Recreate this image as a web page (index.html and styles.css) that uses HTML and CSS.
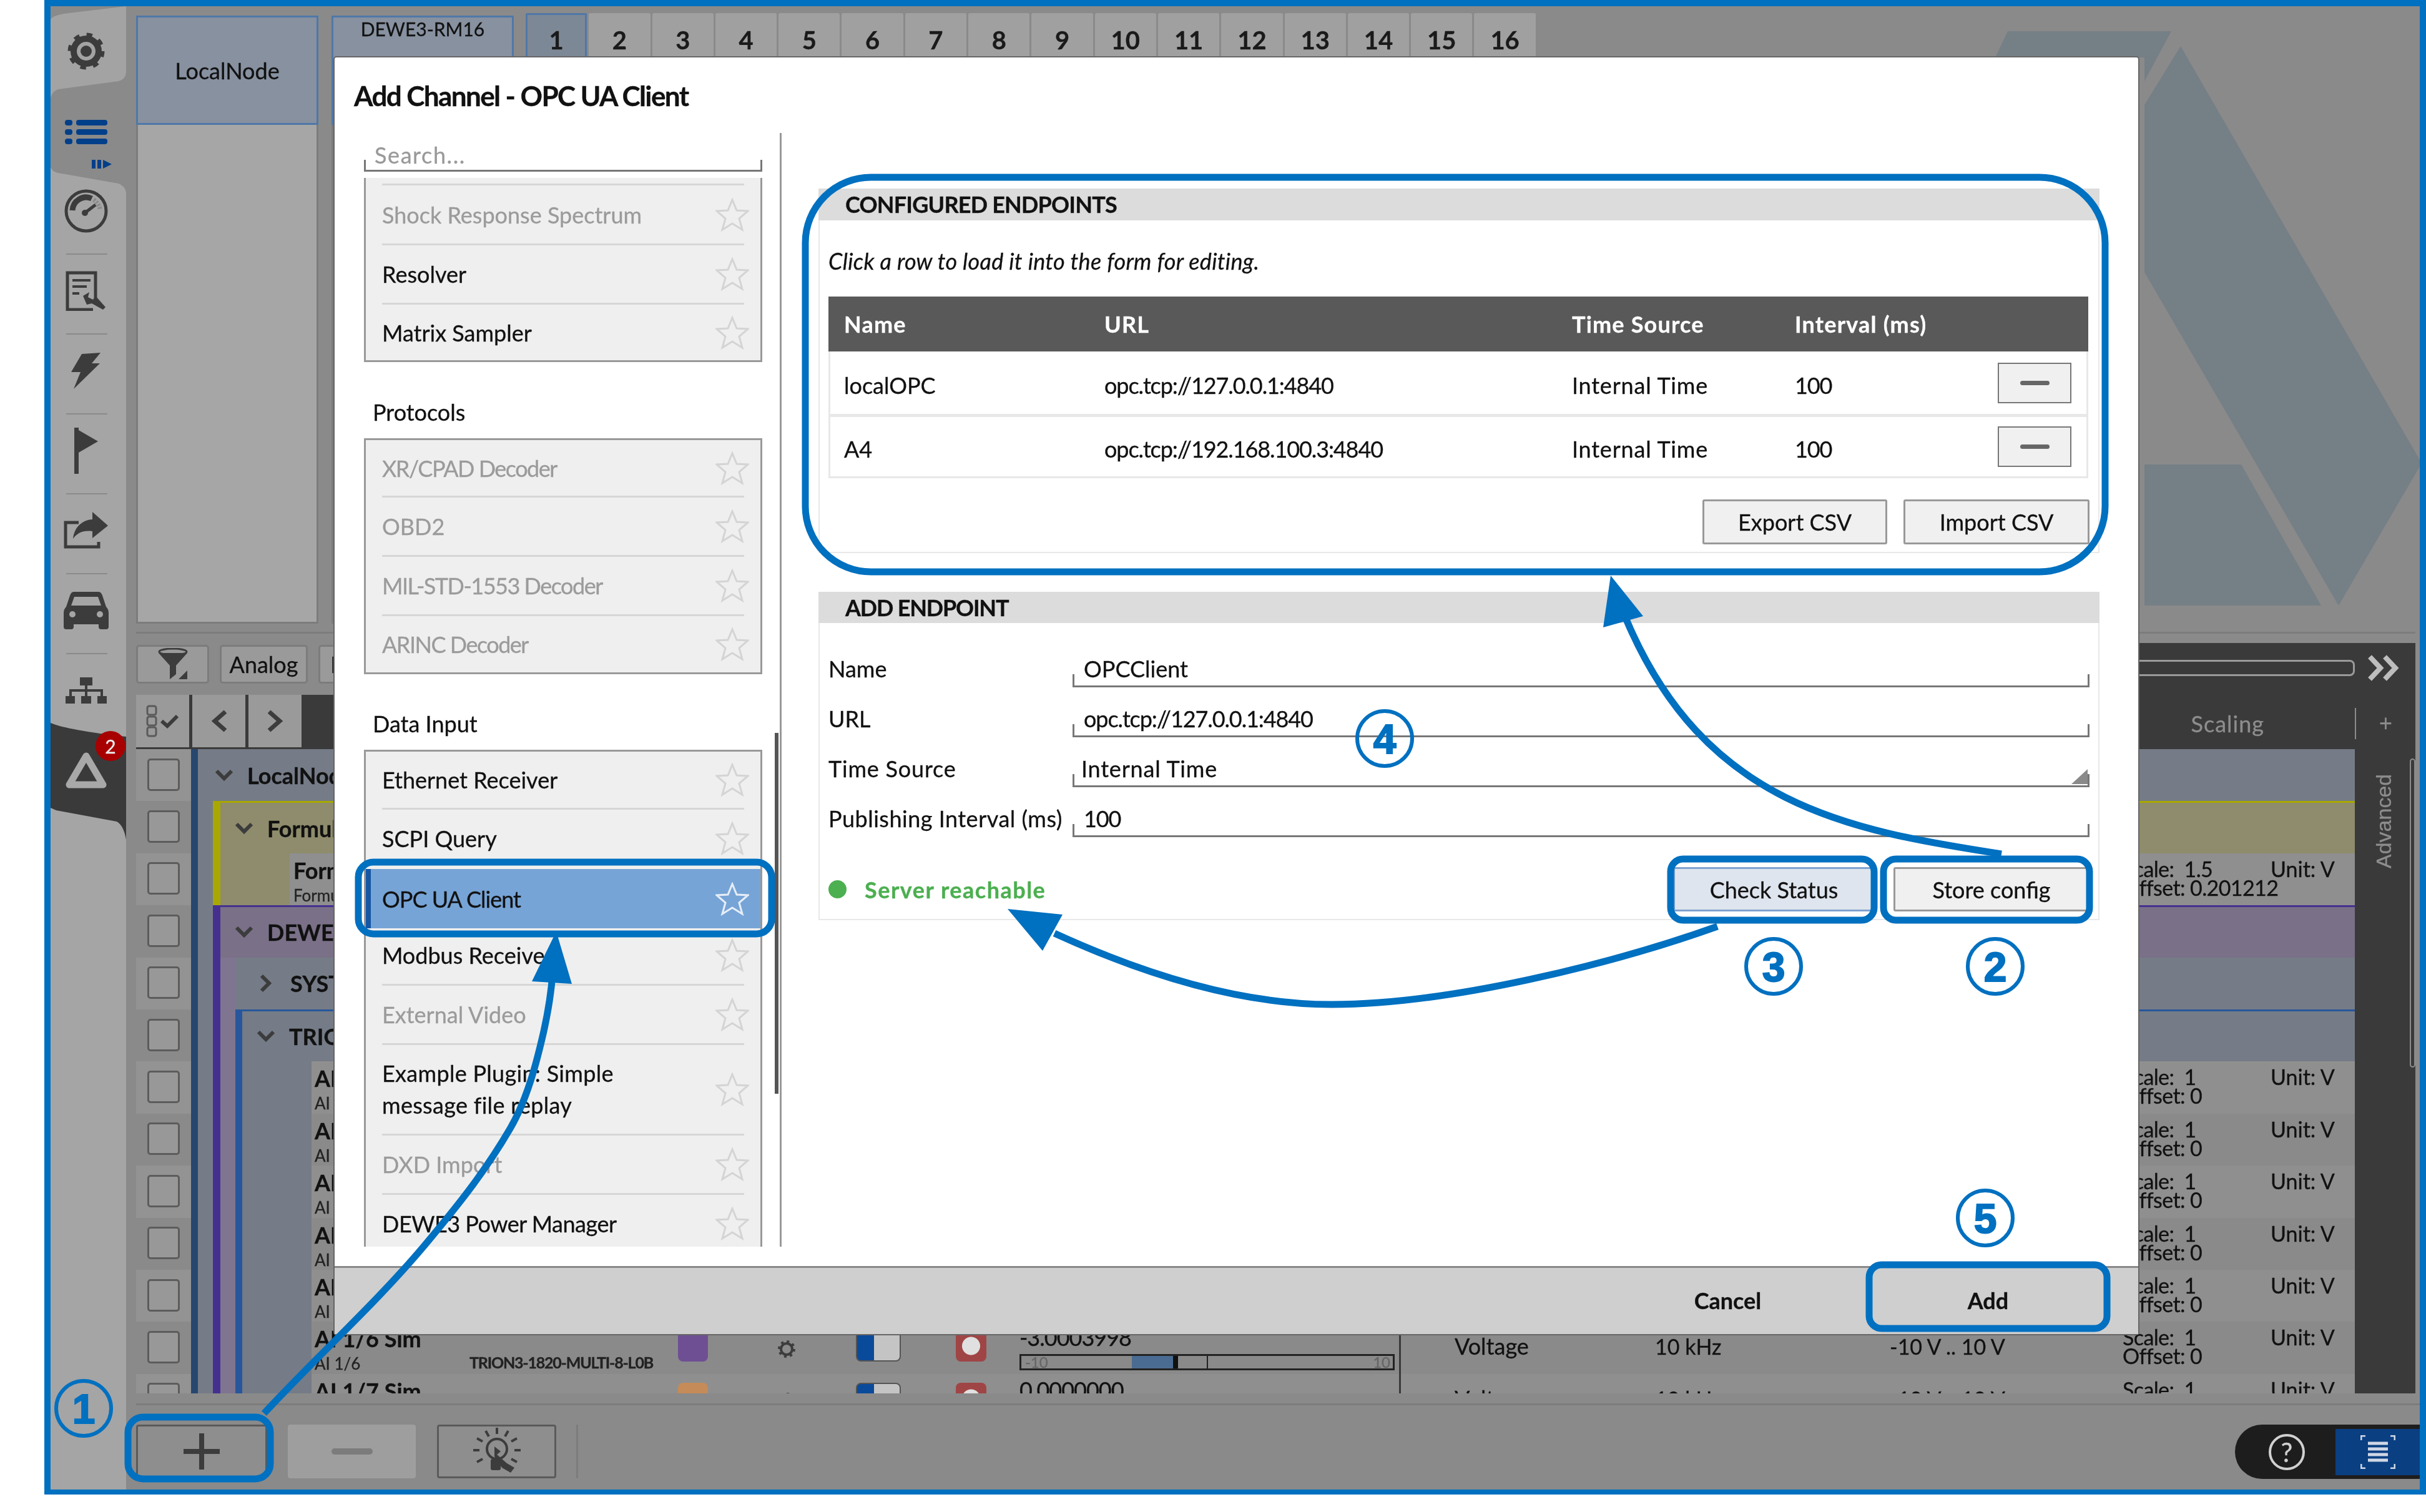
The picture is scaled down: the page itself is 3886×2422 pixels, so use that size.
FILE: index.html
```html
<!DOCTYPE html>
<html lang="en">
<head>
    <meta charset="UTF-8">
    <title>Add Channel - OPC UA Client</title>
    <link rel="stylesheet" href="styles.css">
</head>
<body>
<svg class="defs" width="0" height="0">
    <symbol id="star" viewBox="0 0 54 54"><polygon points="27,3 34,20 52,21 38,33 43,51 27,41 11,51 16,33 2,21 20,20" fill="none" stroke="currentColor" stroke-width="3"/></symbol>
    <symbol id="chev-down" viewBox="0 0 30 20"><path d="M3 3 L15 15 L27 3" fill="none" stroke="#3c3c3c" stroke-width="6"/></symbol>
    <symbol id="chev-right" viewBox="0 0 20 30"><path d="M3 3 L15 15 L3 27" fill="none" stroke="#3c3c3c" stroke-width="6"/></symbol>
    <symbol id="cog" viewBox="0 0 30 30"><circle cx="15" cy="15" r="9" fill="none" stroke="#3c3c3c" stroke-width="4"/><circle cx="15" cy="15" r="12" fill="none" stroke="#3c3c3c" stroke-width="4" stroke-dasharray="4 5.4"/></symbol>
</svg>

<div class="shot">
    <div class="frame">
        <!-- left navigation -->
        <div class="sidebar">
            <svg class="side-bg" viewBox="81 10 121 2376" width="121" height="2376">
                <path d="M81 31 Q85 24 110 21 L202 10 V116 Q201 127 190 130 L93 143 Q84 146 81 156 Z" fill="#a3a3a3"/>
                <path d="M81 268 Q84 275 93 277 L190 294 Q200 298 202 308 V2386 H81 Z" fill="#a5a5a5"/>
                <path d="M81 1158 Q110 1170 202 1180 V1345 Q198 1322 187 1316 L90 1298 L81 1294 Z" fill="#3a3a3a"/>
            </svg>
            <div class="side-item side-first">
                <svg width="60" height="60" viewBox="0 0 60 60"><circle cx="30" cy="30" r="20" fill="none" stroke="#3c3c3c" stroke-width="10"/><circle cx="30" cy="30" r="26" fill="none" stroke="#3c3c3c" stroke-width="7" stroke-dasharray="9 11.4"/><circle cx="30" cy="30" r="9" fill="#3c3c3c"/></svg>
            </div>
            <div class="side-item side-list">
                <svg width="68" height="44" viewBox="0 0 68 44" fill="#003f8a"><rect y="2" width="12" height="9" rx="4"/><rect x="18" y="2" width="50" height="9" rx="4"/><rect y="17" width="12" height="9" rx="4"/><rect x="18" y="17" width="50" height="9" rx="4"/><rect y="32" width="12" height="9" rx="4"/><rect x="18" y="32" width="50" height="9" rx="4"/></svg>
                <svg class="mini-run" width="32" height="14" viewBox="0 0 32 14" fill="#003f8a"><rect width="6" height="14"/><rect x="9" width="6" height="14"/><polygon points="18,0 32,7 18,14"/></svg>
            </div>
            <div class="side-item">
                <svg width="70" height="70" viewBox="0 0 70 70"><circle cx="35" cy="35" r="32" fill="none" stroke="#3c3c3c" stroke-width="5"/><path d="M13 34 A 22 22 0 0 1 44 15" fill="none" stroke="#3c3c3c" stroke-width="9"/><path d="M47 17 A 22 22 0 0 1 57 32" fill="none" stroke="#8a8a8a" stroke-width="7" stroke-dasharray="3 2"/><path d="M33 38 L50 25" stroke="#3c3c3c" stroke-width="5"/><circle cx="33" cy="38" r="5" fill="#3c3c3c"/></svg>
            </div>
            <div class="side-item side-sep">
                <svg width="66" height="64" viewBox="0 0 66 64"><path d="M48 46 V3 H3 V62 H44" fill="none" stroke="#3c3c3c" stroke-width="5"/><path d="M11 15 H40 M11 25 H34 M11 36 H22" stroke="#3c3c3c" stroke-width="4"/><path d="M28 40 L38 34 L36 42 L44 46 L48 40 L64 58 L60 62 L42 52 L34 54 Z" fill="#3c3c3c"/></svg>
            </div>
            <div class="side-item side-sep">
                <svg width="48" height="58" viewBox="0 0 48 58"><path d="M17 2 L47 0 L33 17 L46 17 L4 58 L15 31 L0 31 Z" fill="#3c3c3c"/></svg>
            </div>
            <div class="side-item side-sep">
                <svg width="38" height="74" viewBox="0 0 38 74"><rect width="7" height="74" fill="#3c3c3c"/><polygon points="0,0 38,22 0,44" fill="#3c3c3c"/></svg>
            </div>
            <div class="side-item side-sep">
                <svg width="72" height="60" viewBox="0 0 72 60"><path d="M24 17 H3 V56 H56 V48" fill="none" stroke="#3c3c3c" stroke-width="5"/><path d="M46 0 L71 22 L46 42 V31 C32 29 22 33 15 43 C17 24 30 13 46 12 Z" fill="#3c3c3c"/></svg>
            </div>
            <div class="side-item side-sep">
                <svg width="72" height="64" viewBox="0 0 72 64"><path fill-rule="evenodd" d="M16 2 H56 Q60 2 62 8 L68 26 Q72 30 72 36 V58 Q72 62 68 62 H60 Q56 62 56 58 V54 H16 V58 Q16 62 12 62 H4 Q0 62 0 58 V36 Q0 30 4 26 L10 8 Q12 2 16 2 Z M17 10 L12 24 H60 L55 10 Z" fill="#3c3c3c"/><circle cx="14" cy="38" r="5" fill="#a5a5a5"/><circle cx="58" cy="38" r="5" fill="#a5a5a5"/></svg>
            </div>
            <div class="side-item side-sep">
                <svg width="66" height="42" viewBox="0 0 66 42" fill="#3c3c3c"><rect x="23" width="20" height="13"/><rect x="31" y="13" width="4" height="17"/><rect x="6" y="19" width="54" height="4"/><rect x="6" y="19" width="4" height="11"/><rect x="56" y="19" width="4" height="11"/><rect y="30" width="15" height="12"/><rect x="25" y="30" width="16" height="12"/><rect x="51" y="30" width="15" height="12"/></svg>
            </div>
            <div class="side-item">
                <svg width="68" height="60" viewBox="0 0 68 60"><polygon points="34,7 61,53 7,53" fill="none" stroke="#a8a8a8" stroke-width="11" stroke-linejoin="round"/></svg>
                <span class="badge">2</span>
            </div>
        </div>

        <div class="main">
            <!-- node and slot selector -->
            <div class="top-area">
                <svg class="big-logo" viewBox="0 0 680 1015" width="680" height="1015" fill="#757f86">
                    <polygon points="0,92 20,50 282,50 239,130 239,92"/>
                    <polygon points="239,168 297,74 683,742 550,970 239,436"/>
                    <polygon points="239,744 394,744 522,970 239,970"/>
                </svg>
                <div class="node-col">
                    <div class="node-tile">LocalNode</div>
                    <div class="node-panel"></div>
                </div>
                <div class="node-col node-col-device">
                    <div class="node-tile node-tile-device">DEWE3-RM16</div>
                    <div class="node-panel"></div>
                </div>
                <div class="slot-tabs">
                    <div class="slot-tab slot-tab-active">1</div>
                    <div class="slot-tab">2</div>
                    <div class="slot-tab">3</div>
                    <div class="slot-tab">4</div>
                    <div class="slot-tab">5</div>
                    <div class="slot-tab">6</div>
                    <div class="slot-tab">7</div>
                    <div class="slot-tab">8</div>
                    <div class="slot-tab">9</div>
                    <div class="slot-tab">10</div>
                    <div class="slot-tab">11</div>
                    <div class="slot-tab">12</div>
                    <div class="slot-tab">13</div>
                    <div class="slot-tab">14</div>
                    <div class="slot-tab">15</div>
                    <div class="slot-tab">16</div>
                </div>
            </div>

            <!-- filters and column headers -->
            <div class="head">
                <div class="head-left">
                    <div class="toolbar">
                        <div class="tool-btn tool-filter">
                            <svg width="50" height="52" viewBox="0 0 50 52"><ellipse cx="25" cy="6" rx="22" ry="5" fill="none" stroke="#3c3c3c" stroke-width="3"/><path d="M2 8 L20 28 V50 L30 42 V28 L48 8 Z" fill="#3c3c3c"/><polygon points="34,50 48,36 48,50" fill="#3c3c3c"/></svg>
                        </div>
                        <div class="tool-btn tool-text">Analog</div>
                        <div class="tool-btn tool-text">Digital</div>
                    </div>
                    <div class="strip">
                        <div class="strip-btn">
                            <svg width="54" height="52" viewBox="0 0 54 52"><g fill="none" stroke="#5a5a5a" stroke-width="3"><rect x="2" y="2" width="14" height="14" rx="3"/><rect x="2" y="19" width="14" height="14" rx="3"/><rect x="2" y="36" width="14" height="14" rx="3"/></g><path d="M25 26 L34 34 L50 18" fill="none" stroke="#3c3c3c" stroke-width="6"/></svg>
                        </div>
                        <div class="strip-btn">
                            <svg width="26" height="36" viewBox="0 0 26 36"><path d="M23 3 L6 18 L23 33" fill="none" stroke="#3c3c3c" stroke-width="7"/></svg>
                        </div>
                        <div class="strip-btn">
                            <svg width="26" height="36" viewBox="0 0 26 36"><path d="M3 3 L20 18 L3 33" fill="none" stroke="#3c3c3c" stroke-width="7"/></svg>
                        </div>
                    </div>
                </div>
                <div class="head-right">
                    <div class="slider-row">
                        <div class="slider"></div>
                        <svg class="more" width="56" height="44" viewBox="0 0 56 44"><path d="M4 4 L21 22 L4 40 M28 4 L45 22 L28 40" fill="none" stroke="#bdbdbd" stroke-width="8"/></svg>
                    </div>
                    <div class="cols-row">
                        <span class="col-scaling">Scaling</span>
                        <span class="col-add">+</span>
                    </div>
                </div>
            </div>

            <!-- channel table -->
            <div class="table-wrap">
                <div class="rows">
                    <div class="tr">
                        <div class="check-cell"><span class="check"></span></div>
                        <div class="band band-root"></div>
                        <div class="cell cell-slate cell-node"><svg class="chev" width="30" height="20"><use href="#chev-down"/></svg><b>LocalNode</b></div>
                    </div>
                    <div class="tr">
                        <div class="check-cell"><span class="check"></span></div>
                        <div class="band band-root"></div>
                        <div class="gap gap-slate"></div>
                        <div class="band band-yellow"></div>
                        <div class="cell cell-olive cell-group"><svg class="chev" width="30" height="20"><use href="#chev-down"/></svg><b>Formula</b></div>
                    </div>
                    <div class="tr">
                        <div class="check-cell"><span class="check"></span></div>
                        <div class="band band-root"></div>
                        <div class="gap gap-slate"></div>
                        <div class="band band-yellow"></div>
                        <div class="gap gap-olive"></div>
                        <div class="cell cell-gray">
                            <div class="name name-formula"><b>Formula 1</b><small>Formula</small></div>
                            <div class="scale">Scale: &nbsp;1.5<br>Offset: 0.201212</div>
                            <div class="unit">Unit: V</div>
                        </div>
                    </div>
                    <div class="tr">
                        <div class="check-cell"><span class="check"></span></div>
                        <div class="band band-root"></div>
                        <div class="gap gap-slate"></div>
                        <div class="band band-purple"></div>
                        <div class="cell cell-purple cell-group"><svg class="chev" width="30" height="20"><use href="#chev-down"/></svg><b>DEWE3-RM16</b></div>
                    </div>
                    <div class="tr">
                        <div class="check-cell"><span class="check"></span></div>
                        <div class="band band-root"></div>
                        <div class="gap gap-slate"></div>
                        <div class="band band-purple"></div>
                        <div class="gap gap-purple"></div>
                        <div class="cell cell-slate cell-sub"><svg class="chev-r" width="20" height="30"><use href="#chev-right"/></svg><b>SYSTEM</b></div>
                    </div>
                    <div class="tr">
                        <div class="check-cell"><span class="check"></span></div>
                        <div class="band band-root"></div>
                        <div class="gap gap-slate"></div>
                        <div class="band band-purple"></div>
                        <div class="gap gap-purple"></div>
                        <div class="band band-blue"></div>
                        <div class="cell cell-slate cell-trion"><svg class="chev" width="30" height="20"><use href="#chev-down"/></svg><b>TRION3</b></div>
                    </div>
                    <div class="tr">
                        <div class="check-cell"><span class="check"></span></div>
                        <div class="band band-root"></div>
                        <div class="gap gap-slate"></div>
                        <div class="band band-purple"></div>
                        <div class="gap gap-purple"></div>
                        <div class="band band-blue"></div>
                        <div class="gap gap-wide"></div>
                        <div class="cell cell-gray">
                            <div class="name"><b>AI 1/1 Sim</b><small>AI 1/1</small></div>
                            <div class="scale">Scale: &nbsp;1<br>Offset: 0</div>
                            <div class="unit">Unit: V</div>
                        </div>
                    </div>
                    <div class="tr">
                        <div class="check-cell"><span class="check"></span></div>
                        <div class="band band-root"></div>
                        <div class="gap gap-slate"></div>
                        <div class="band band-purple"></div>
                        <div class="gap gap-purple"></div>
                        <div class="band band-blue"></div>
                        <div class="gap gap-wide"></div>
                        <div class="cell cell-gray">
                            <div class="name"><b>AI 1/2 Sim</b><small>AI 1/2</small></div>
                            <div class="scale">Scale: &nbsp;1<br>Offset: 0</div>
                            <div class="unit">Unit: V</div>
                        </div>
                    </div>
                    <div class="tr">
                        <div class="check-cell"><span class="check"></span></div>
                        <div class="band band-root"></div>
                        <div class="gap gap-slate"></div>
                        <div class="band band-purple"></div>
                        <div class="gap gap-purple"></div>
                        <div class="band band-blue"></div>
                        <div class="gap gap-wide"></div>
                        <div class="cell cell-gray">
                            <div class="name"><b>AI 1/3 Sim</b><small>AI 1/3</small></div>
                            <div class="scale">Scale: &nbsp;1<br>Offset: 0</div>
                            <div class="unit">Unit: V</div>
                        </div>
                    </div>
                    <div class="tr">
                        <div class="check-cell"><span class="check"></span></div>
                        <div class="band band-root"></div>
                        <div class="gap gap-slate"></div>
                        <div class="band band-purple"></div>
                        <div class="gap gap-purple"></div>
                        <div class="band band-blue"></div>
                        <div class="gap gap-wide"></div>
                        <div class="cell cell-gray">
                            <div class="name"><b>AI 1/4 Sim</b><small>AI 1/4</small></div>
                            <div class="scale">Scale: &nbsp;1<br>Offset: 0</div>
                            <div class="unit">Unit: V</div>
                        </div>
                    </div>
                    <div class="tr">
                        <div class="check-cell"><span class="check"></span></div>
                        <div class="band band-root"></div>
                        <div class="gap gap-slate"></div>
                        <div class="band band-purple"></div>
                        <div class="gap gap-purple"></div>
                        <div class="band band-blue"></div>
                        <div class="gap gap-wide"></div>
                        <div class="cell cell-gray">
                            <div class="name"><b>AI 1/5 Sim</b><small>AI 1/5</small></div>
                            <div class="scale">Scale: &nbsp;1<br>Offset: 0</div>
                            <div class="unit">Unit: V</div>
                        </div>
                    </div>
                    <div class="tr">
                        <div class="check-cell"><span class="check"></span></div>
                        <div class="band band-root"></div>
                        <div class="gap gap-slate"></div>
                        <div class="band band-purple"></div>
                        <div class="gap gap-purple"></div>
                        <div class="band band-blue"></div>
                        <div class="gap gap-wide"></div>
                        <div class="cell cell-gray">
                            <div class="name name-narrow"><b>AI 1/6 Sim</b><small>AI 1/6</small></div>
                            <div class="device">TRION3-1820-MULTI-8-L0B</div>
                            <div class="swatch swatch-purple"></div>
                            <div class="cog-cell"><svg width="30" height="30"><use href="#cog"/></svg></div>
                            <div class="toggle"></div>
                            <div class="rec"></div>
                            <div class="value-cell">
                                <div class="value">-3.0003998</div>
                                <div class="meter">
                                    <span class="meter-min">-10</span>
                                    <span class="meter-fill"></span>
                                    <span class="meter-mark"></span>
                                    <span class="meter-zero"></span>
                                    <span class="meter-max">10</span>
                                </div>
                            </div>
                            <div class="kind">Voltage</div>
                            <div class="rate">10 kHz</div>
                            <div class="range">-10 V .. 10 V</div>
                            <div class="scale">Scale: &nbsp;1<br>Offset: 0</div>
                            <div class="unit">Unit: V</div>
                        </div>
                    </div>
                    <div class="tr">
                        <div class="check-cell"><span class="check"></span></div>
                        <div class="band band-root"></div>
                        <div class="gap gap-slate"></div>
                        <div class="band band-purple"></div>
                        <div class="gap gap-purple"></div>
                        <div class="band band-blue"></div>
                        <div class="gap gap-wide"></div>
                        <div class="cell cell-gray">
                            <div class="name name-narrow"><b>AI 1/7 Sim</b><small>AI 1/7</small></div>
                            <div class="device">TRION3-1820-MULTI-8-L0B</div>
                            <div class="swatch swatch-orange"></div>
                            <div class="cog-cell"><svg width="30" height="30"><use href="#cog"/></svg></div>
                            <div class="toggle"></div>
                            <div class="rec"></div>
                            <div class="value-cell">
                                <div class="value">0.0000000</div>
                            </div>
                            <div class="kind">Voltage</div>
                            <div class="rate">10 kHz</div>
                            <div class="range">-10 V .. 10 V</div>
                            <div class="scale">Scale: &nbsp;1<br>Offset: 0</div>
                            <div class="unit">Unit: V</div>
                        </div>
                    </div>
                </div>
                <div class="advanced">
                    <span class="advanced-label">Advanced</span>
                    <span class="advanced-scroll"></span>
                </div>
            </div>

            <!-- bottom actions -->
            <div class="bottom-bar">
                <div class="bar-btn bar-add">
                    <svg width="66" height="66" viewBox="0 0 66 66"><path d="M33 4 V62 M4 33 H62" stroke="#3c3c3c" stroke-width="8"/></svg>
                </div>
                <div class="bar-btn bar-remove">
                    <svg width="66" height="10" viewBox="0 0 66 10"><rect width="66" height="10" rx="5" fill="#7c7c7c"/></svg>
                </div>
                <div class="bar-btn bar-bulb">
                    <svg width="76" height="76" viewBox="0 0 76 76"><g stroke="#3c3c3c" stroke-width="4"><path d="M38 0 V10 M20 5 L25 14 M56 5 L51 14 M6 17 L15 22 M70 17 L61 22 M0 36 H10 M66 36 H76 M6 55 L15 50 M70 55 L61 50"/></g><circle cx="38" cy="34" r="16" fill="none" stroke="#3c3c3c" stroke-width="4"/><path d="M34 30 L44 38 L38 43 L54 57 L66 64 L60 72 L46 64 L34 46 Z" fill="#3c3c3c"/><rect x="28" y="50" width="16" height="18" rx="3" fill="#3c3c3c"/></svg>
                </div>
                <div class="bar-divider"></div>
                <div class="pill">
                    <svg class="pill-help" width="60" height="60" viewBox="0 0 60 60"><circle cx="30" cy="30" r="27" fill="none" stroke="#d0d0d0" stroke-width="4"/></svg>
                    <span class="pill-mark">?</span>
                    <div class="pill-list">
                        <svg width="56" height="54" viewBox="0 0 56 54"><g fill="none" stroke="#cfd8e6" stroke-width="3"><path d="M1 8 V1 H8 M48 1 H55 V8 M1 46 V53 H8 M48 53 H55 V46"/></g><path d="M12 13 H44 M12 22 H44 M12 31 H44 M12 40 H44" stroke="#cfd8e6" stroke-width="5"/></svg>
                    </div>
                </div>
            </div>
        </div>
    </div>

    <!-- modal dialog -->
    <div class="dialog">
        <div class="dialog-title">Add Channel - OPC UA Client</div>
        <div class="dialog-body">
            <div class="list-pane">
                <div class="search">Search...</div>
                <div class="list-box list-box-scrolled">
                    <div class="item item-off"><span>Shock Response Spectrum</span><svg class="star"><use href="#star"/></svg></div>
                    <div class="item"><span>Resolver</span><svg class="star"><use href="#star"/></svg></div>
                    <div class="item"><span>Matrix Sampler</span><svg class="star"><use href="#star"/></svg></div>
                </div>
                <div class="list-label">Protocols</div>
                <div class="list-box list-box-proto">
                    <div class="item item-off item-caps"><span>XR/CPAD Decoder</span><svg class="star"><use href="#star"/></svg></div>
                    <div class="item item-off"><span>OBD2</span><svg class="star"><use href="#star"/></svg></div>
                    <div class="item item-off item-caps"><span>MIL-STD-1553 Decoder</span><svg class="star"><use href="#star"/></svg></div>
                    <div class="item item-off item-caps"><span>ARINC Decoder</span><svg class="star"><use href="#star"/></svg></div>
                </div>
                <div class="list-label list-label-input">Data Input</div>
                <div class="list-box">
                    <div class="item"><span>Ethernet Receiver</span><svg class="star"><use href="#star"/></svg></div>
                    <div class="item"><span>SCPI Query</span><svg class="star"><use href="#star"/></svg></div>
                    <div class="item item-selected"><span>OPC UA Client</span><svg class="star"><use href="#star"/></svg></div>
                    <div class="item item-after"><span>Modbus Receiver</span><svg class="star"><use href="#star"/></svg></div>
                    <div class="item item-off"><span>External Video</span><svg class="star"><use href="#star"/></svg></div>
                    <div class="item item-tall"><span>Example Plugin: Simple<br>message file replay</span><svg class="star"><use href="#star"/></svg></div>
                    <div class="item item-off"><span>DXD Import</span><svg class="star"><use href="#star"/></svg></div>
                    <div class="item item-caps-light"><span>DEWE3 Power Manager</span><svg class="star"><use href="#star"/></svg></div>
                </div>
                <div class="list-scroll"></div>
            </div>

            <div class="form-pane">
                <div class="panel">
                    <div class="panel-head">CONFIGURED ENDPOINTS</div>
                    <div class="panel-body panel-body-list">
                        <div class="hint">Click a row to load it into the form for editing.</div>
                        <div class="ep-table">
                            <div class="ep-row ep-head">
                                <span>Name</span><span>URL</span><span>Time Source</span><span>Interval (ms)</span>
                            </div>
                            <div class="ep-row">
                                <span>localOPC</span><span class="url">opc.tcp://127.0.0.1:4840</span><span class="wide">Internal Time</span><span class="url">100</span>
                                <button class="minus"><i></i></button>
                            </div>
                            <div class="ep-row">
                                <span>A4</span><span class="url">opc.tcp://192.168.100.3:4840</span><span class="wide">Internal Time</span><span class="url">100</span>
                                <button class="minus"><i></i></button>
                            </div>
                        </div>
                        <div class="csv-row">
                            <button class="btn btn-export">Export CSV</button>
                            <button class="btn btn-import">Import CSV</button>
                        </div>
                    </div>
                </div>

                <div class="panel panel-add">
                    <div class="panel-head">ADD ENDPOINT</div>
                    <div class="panel-body panel-body-form">
                        <div class="form-row"><label>Name</label><div class="field">OPCClient</div></div>
                        <div class="form-row"><label>URL</label><div class="field"><span class="url">opc.tcp://127.0.0.1:4840</span></div></div>
                        <div class="form-row"><label class="wide">Time Source</label><div class="field field-select"><span class="wide">Internal Time</span><span class="select-corner"></span></div></div>
                        <div class="form-row"><label class="wide-less">Publishing Interval (ms)</label><div class="field"><span class="url">100</span></div></div>
                        <div class="status-row">
                            <span class="status-dot"></span>
                            <span class="status-text">Server reachable</span>
                            <button class="btn btn-check">Check Status</button>
                            <button class="btn btn-store">Store config</button>
                        </div>
                    </div>
                </div>
            </div>
        </div>
        <div class="dialog-foot">
            <div class="foot-btn">Cancel</div>
            <div class="foot-btn">Add</div>
        </div>
    </div>

    <!-- callouts drawn on top of the screenshot -->
    <svg class="callouts" viewBox="0 0 3886 2422" width="3886" height="2422">
        <g fill="none" stroke="#0070c0" stroke-width="11">
            <rect x="1290" y="284" width="2082" height="632" rx="105"/>
            <rect x="574" y="1381" width="662" height="115" rx="24"/>
            <rect x="205" y="2270" width="228" height="99" rx="24"/>
            <rect x="2676" y="1376" width="326" height="98" rx="20"/>
            <rect x="3017" y="1376" width="330" height="98" rx="20"/>
            <rect x="2994" y="2026" width="381" height="102" rx="20"/>
            <path d="M423 2264 C510 2170 600 2090 680 1995 C730 1935 775 1880 817 1808 C845 1760 860 1700 871 1652 C878 1620 883 1590 885 1560"/>
            <path d="M2751 1484 C2580 1545 2320 1609 2133 1609 C1980 1609 1820 1555 1689 1495"/>
            <path d="M3206 1368 C2960 1330 2730 1290 2604 990"/>
        </g>
        <g fill="#0070c0">
            <polygon points="891,1492 852,1572 916,1576"/>
            <polygon points="1614,1456 1702,1465 1670,1523"/>
            <polygon points="2580,922 2568,1005 2632,987"/>
        </g>
        <g class="num">
            <circle cx="134" cy="2256" r="44"/><text x="134" y="2280">1</text>
            <circle cx="3196" cy="1548" r="44"/><text x="3196" y="1572">2</text>
            <circle cx="2841" cy="1548" r="44"/><text x="2841" y="1572">3</text>
            <circle cx="2218" cy="1183" r="44"/><text x="2218" y="1207">4</text>
            <circle cx="3180" cy="1951" r="44"/><text x="3180" y="1975">5</text>
        </g>
    </svg>
</div>
</body>
</html>
```

FILE: styles.css
```css
body {
    margin: 0;
    background: #fff;
    color: #111;
    font-family: "Lato", "Noto Sans", sans-serif;
    font-size: 36px;
    -webkit-text-stroke: 0.3px;
}

.defs {
    position: absolute;
}

.shot {
    position: relative;
    width: 3886px;
    height: 2422px;
    padding-left: 71px;
    box-sizing: border-box;
    overflow: hidden;
    filter: blur(0.7px);
}

.frame {
    display: flex;
    height: 2394px;
    box-sizing: border-box;
    border: 10px solid #0070c0;
    border-bottom-width: 8px;
    background: #8a8a8a;
}

/* sidebar */
.sidebar {
    position: relative;
    flex: none;
    width: 121px;
    margin-right: 16px;
}

.side-bg {
    position: absolute;
    left: 0;
    top: 0;
}

.side-item {
    position: relative;
    display: flex;
    flex-direction: column;
    align-items: center;
    justify-content: center;
    height: 128px;
    padding-right: 7px;
    box-sizing: border-box;
}

.side-first {
    margin-top: 8px;
}

.side-list .mini-run {
    margin: 22px 0 0 50px;
}

.side-list {
    justify-content: flex-start;
    padding-top: 44px;
}

.side-sep::before {
    content: "";
    position: absolute;
    left: 25px;
    top: 4px;
    width: 66px;
    height: 2px;
    background: #8a8a8a;
}

.badge {
    position: absolute;
    left: 72px;
    top: 1px;
    width: 48px;
    height: 48px;
    border-radius: 50%;
    background: #a80000;
    color: #eee;
    font-size: 30px;
    line-height: 48px;
    text-align: center;
}

.main {
    position: relative;
    flex: 1;
    min-width: 0;
    display: flex;
    flex-direction: column;
}

/* top selector */
.top-area {
    position: relative;
    display: flex;
    flex: none;
    height: 1005px;
    box-sizing: border-box;
    padding-top: 15px;
    margin-right: 7px;
    border-bottom: 3px solid #7c7c7c;
}

.big-logo {
    position: absolute;
    right: -7px;
    top: -10px;
}

.node-col {
    position: relative;
    flex: none;
    width: 292px;
    margin-right: 21px;
}

.node-col-device {
    margin-right: 19px;
}

.node-tile {
    display: flex;
    align-items: center;
    justify-content: center;
    height: 175px;
    box-sizing: border-box;
    background: #8791a0;
    border: 3px solid #4f78a8;
    font-size: 36px;
    color: #111;
}

.node-tile-device {
    align-items: flex-start;
    font-size: 30px;
}

.node-panel {
    height: 799px;
    box-sizing: border-box;
    background: #a6a6a6;
    border: 3px solid #7c7c7c;
    border-top: 0;
}

.slot-tabs {
    position: relative;
    display: flex;
    gap: 3px;
    margin-top: -4px;
}

.slot-tab {
    width: 98.3px;
    height: 92px;
    box-sizing: border-box;
    padding-top: 19px;
    background: #a0a0a0;
    border-radius: 3px 3px 0 0;
    font-size: 40px;
    font-weight: 700;
    text-align: center;
    color: #1a1a1a;
}

.slot-tab-active {
    background: #7d8896;
    border: 3px solid #4f78a8;
    border-bottom: 0;
    padding-top: 16px;
}

/* table head */
.head {
    display: flex;
    flex: none;
    height: 185px;
    margin-right: 7px;
}

.head-left {
    flex: none;
    width: 1000px;
    padding-top: 18px;
    box-sizing: border-box;
}

.toolbar {
    display: flex;
    gap: 17px;
    height: 62px;
}

.tool-btn {
    display: flex;
    align-items: center;
    justify-content: center;
    box-sizing: border-box;
    background: #9a9a9a;
    border: 3px solid #7c7c7c;
    border-radius: 5px;
    color: #111;
}

.tool-filter {
    width: 117px;
}

.tool-text {
    width: 141px;
    font-size: 36px;
}

.strip {
    display: flex;
    gap: 5px;
    height: 87px;
    margin-top: 18px;
    background: #3a3a3a;
}

.strip-btn {
    display: flex;
    align-items: center;
    justify-content: center;
    width: 85px;
    margin-bottom: 3px;
    background: #9a9a9a;
}

.head-right {
    flex: 1;
    margin-top: 15px;
    background: #3a3a3a;
}

.slider-row {
    display: flex;
    justify-content: flex-end;
    align-items: center;
    height: 72px;
    padding-top: 8px;
    box-sizing: border-box;
    padding-right: 21px;
}

.slider {
    width: 1500px;
    height: 26px;
    box-sizing: border-box;
    border: 3px solid #9a9a9a;
    border-radius: 8px;
}

.more {
    margin-left: 20px;
}

.cols-row {
    display: flex;
    justify-content: flex-end;
    align-items: center;
    height: 50px;
    margin-top: 32px;
    color: #8d8d8d;
}

.col-scaling {
    margin-right: 145px;
    letter-spacing: 1px;
}

.col-add {
    width: 97px;
    height: 50px;
    box-sizing: border-box;
    border-left: 2px solid #8d8d8d;
    text-align: center;
    line-height: 46px;
}

/* channel table */
.table-wrap {
    display: flex;
    flex: none;
    height: 1032px;
    margin-right: 7px;
    overflow: hidden;
}

.rows {
    flex: 1;
    min-width: 0;
}

.tr {
    display: flex;
    height: 83.4px;
}

.check-cell {
    display: flex;
    align-items: center;
    justify-content: center;
    flex: none;
    width: 88px;
    padding-bottom: 2px;
    box-sizing: border-box;
    background: #8a8a8a;
}

.tr:nth-child(odd) .check-cell {
    background: #939393;
}

.check {
    width: 52px;
    height: 52px;
    box-sizing: border-box;
    border: 3px solid #5c5c5c;
    border-radius: 5px;
    background: #989898;
}

.band {
    flex: none;
    width: 12px;
}

.band-root {
    width: 11px;
    background: #27476f;
}

.band-yellow {
    background: #a8a800;
}

.band-purple {
    background: #46308f;
}

.band-blue {
    width: 11px;
    background: #27569c;
}

.gap {
    flex: none;
    width: 24px;
}

.gap-slate {
    background: #757c87;
}

.gap-olive {
    width: 111px;
    background: #8e8c6c;
}

.gap-purple {
    background: #7f7590;
}

.gap-wide {
    width: 111px;
    background: #757c87;
}

.cell {
    display: flex;
    flex: 1;
    min-width: 0;
    box-sizing: border-box;
    white-space: nowrap;
}

.cell b {
    font-size: 36px;
    font-weight: 700;
    color: #111;
}

.cell-slate {
    background: #757c87;
}

.cell-olive {
    background: #8e8c6c;
    border-top: 3px solid #a8a800;
}

.cell-purple {
    background: #7a7088;
    border-top: 3px solid #46308f;
}

.cell-gray {
    background: #8a8a8a;
}

.tr:nth-child(odd) .cell-gray {
    background: #8f8f8f;
}

.cell-node,
.cell-group,
.cell-sub,
.cell-trion {
    align-items: center;
}

.cell-node {
    padding-left: 27px;
}

.cell-group {
    padding-left: 23px;
}

.cell-sub {
    padding-left: 39px;
}

.cell-trion {
    padding-left: 23px;
    border-top: 3px solid #27569c;
}

.chev {
    margin-right: 22px;
}

.chev-r {
    margin-right: 29px;
}

.name {
    flex: 1;
    min-width: 0;
    padding: 5px 0 0 5px;
}

.name b,
.name small {
    display: block;
}

.name small {
    margin-top: 2px;
    font-size: 26px;
    color: #222;
}

.name-formula {
    padding-left: 6px;
}

.name-narrow {
    flex: none;
    width: 253px;
    box-sizing: border-box;
}

.scale {
    flex: none;
    width: 237px;
    padding-top: 10px;
    font-size: 34px;
    line-height: 30px;
    letter-spacing: -0.6px;
}

.unit {
    flex: none;
    width: 135px;
    padding-top: 10px;
    font-size: 34px;
    line-height: 30px;
}

.device {
    flex: none;
    width: 334px;
    padding-top: 50px;
    font-size: 25px;
    font-weight: 700;
    letter-spacing: -1.2px;
    color: #222;
}

.swatch {
    flex: none;
    width: 48px;
    height: 50px;
    margin-top: 14px;
    border-radius: 8px;
}

.swatch-purple {
    background: #6f4f94;
}

.swatch-orange {
    background: #c58b58;
}

.cog-cell {
    flex: none;
    width: 237px;
    padding: 23px 0 0 111px;
    box-sizing: border-box;
}

.toggle {
    flex: none;
    width: 72px;
    height: 50px;
    margin-top: 14px;
    box-sizing: border-box;
    border: 2px solid #555;
    border-radius: 8px;
    background: linear-gradient(to right, #0a4a9a 40%, #c4c4c4 40%);
}

.rec {
    flex: none;
    width: 49px;
    height: 50px;
    margin: 14px 53px 0 88px;
    border-radius: 8px;
    background: radial-gradient(circle, #e0e0e0 14px, #a04545 15px);
}

.value-cell {
    flex: none;
    width: 608px;
    margin-right: 86px;
    border-right: 3px solid #3a3a3a;
}

.value {
    width: 163px;
    padding-top: 8px;
    font-size: 36px;
    line-height: 34px;
    letter-spacing: -1px;
    text-align: right;
}

.meter {
    position: relative;
    width: 601px;
    height: 26px;
    margin-top: 10px;
    box-sizing: border-box;
    border: 3px solid #222;
    font-size: 24px;
    line-height: 20px;
    color: #666;
}

.meter-min {
    margin-left: 6px;
}

.meter-max {
    position: absolute;
    right: 4px;
}

.meter-fill {
    position: absolute;
    left: 177px;
    top: 0;
    width: 66px;
    height: 100%;
    background: #4a6c92;
}

.meter-mark {
    position: absolute;
    left: 243px;
    top: 0;
    width: 8px;
    height: 100%;
    background: #111;
}

.meter-zero {
    position: absolute;
    left: 297px;
    top: 0;
    width: 2px;
    height: 100%;
    background: #222;
}

.kind {
    flex: none;
    width: 321px;
    padding-top: 17px;
}

.rate {
    flex: none;
    width: 376px;
    padding-top: 19px;
    font-size: 34px;
}

.range {
    flex: none;
    width: 373px;
    padding-top: 19px;
    font-size: 34px;
}

.advanced {
    display: flex;
    flex: none;
    width: 97px;
    background: #3a3a3a;
}

.advanced-label {
    height: 152px;
    margin: 39px 0 0 27px;
    writing-mode: vertical-rl;
    transform: rotate(180deg);
    font-family: "Liberation Sans", sans-serif;
    font-size: 34px;
    color: #8d8d8d;
}

.advanced-scroll {
    width: 9px;
    height: 495px;
    margin: 15px 0 0 auto;
    box-sizing: border-box;
    border: 2px solid #8d8d8d;
    border-radius: 5px;
}

/* bottom bar */
.bottom-bar {
    display: flex;
    flex: none;
    height: 138px;
    margin-top: 16px;
    box-sizing: border-box;
    padding-top: 31px;
    border-top: 3px solid #7c7c7c;
}

.bar-btn {
    display: flex;
    align-items: center;
    justify-content: center;
    flex: none;
    height: 86px;
    box-sizing: border-box;
}

.bar-add {
    width: 210px;
    border: 3px solid #5a5a5a;
    border-radius: 4px;
    background: #8e8e8e;
}

.bar-remove {
    width: 205px;
    margin-left: 33px;
    background: #9e9e9e;
    border-radius: 4px;
}

.bar-bulb {
    width: 191px;
    margin-left: 34px;
    border: 3px solid #5a5a5a;
    border-radius: 4px;
    background: #8e8e8e;
}

.bar-divider {
    width: 3px;
    height: 86px;
    margin-left: 32px;
    background: #7c7c7c;
}

.pill {
    position: relative;
    display: flex;
    align-items: center;
    width: 296px;
    height: 87px;
    margin-left: auto;
    box-sizing: border-box;
    padding-left: 53px;
    background: #1d1d1d;
    border-radius: 44px 0 0 44px;
}

.pill-mark {
    position: absolute;
    left: 53px;
    width: 60px;
    text-align: center;
    font-size: 42px;
    color: #d0d0d0;
}

.pill-list {
    display: flex;
    align-items: center;
    justify-content: center;
    width: 135px;
    height: 74px;
    margin-left: 48px;
    background: #0a3f82;
}

/* dialog */
.dialog {
    position: absolute;
    left: 536px;
    top: 92px;
    display: flex;
    flex-direction: column;
    width: 2889px;
    height: 2045px;
    background: #fff;
    box-shadow: 0 0 0 2px #666;
    border-radius: 3px;
}

.dialog-title {
    height: 121px;
    box-sizing: border-box;
    padding: 36px 0 0 31px;
    font-size: 44px;
    font-weight: 700;
    line-height: 50px;
    letter-spacing: -1.6px;
}

.dialog-body {
    display: flex;
    flex: none;
    height: 1784px;
}

.list-pane {
    position: relative;
    flex: none;
    width: 716px;
    box-sizing: border-box;
    padding-left: 47px;
    border-right: 3px solid #999;
    overflow: hidden;
}

.search {
    width: 638px;
    height: 62px;
    box-sizing: border-box;
    padding: 15px 0 0 17px;
    border-bottom: 3px solid #777;
    background:
        linear-gradient(#777, #777) left bottom / 3px 16px no-repeat,
        linear-gradient(#777, #777) right bottom / 3px 16px no-repeat;
    font-size: 36px;
    line-height: 40px;
    letter-spacing: 1.6px;
    color: #999;
}

.list-box {
    width: 638px;
    box-sizing: border-box;
    background: #efefef;
    border: 3px solid #999;
}

.list-box-scrolled {
    margin-top: 10px;
    padding-top: 9px;
    border-top: 0;
}

.list-box-scrolled .item:first-child {
    height: 96px;
    border-top: 3px solid #d6d6d6;
}

.list-box-scrolled .item:last-child {
    height: 92px;
}

.list-box-proto .item:first-child {
    height: 89px;
}

.list-box-proto .item:last-child {
    height: 93px;
}

.list-label {
    height: 122px;
    box-sizing: border-box;
    padding: 58px 0 0 14px;
    line-height: 45px;
}

.list-label-input {
    height: 121px;
    padding-top: 57px;
}

.item {
    display: flex;
    align-items: center;
    justify-content: space-between;
    height: 95px;
    margin: 0 26px;
    box-sizing: border-box;
    border-top: 3px solid #d6d6d6;
}

.item:first-child {
    height: 90px;
    border-top: 0;
}

.item-off {
    color: #9b9b9b;
}

.item-caps span {
    letter-spacing: -1.5px;
}

.item-caps-light span {
    letter-spacing: -0.5px;
}

.item-tall {
    height: 145px;
}

.item-tall span {
    line-height: 51px;
    letter-spacing: 0.3px;
}

.item-selected {
    height: 95px;
    margin: 3px 0 -3px;
    padding: 0 18px 0 18px;
    border-top: 0;
    border-left: 8px solid #1557a5;
    background: #77a4d6;
    color: #111;
}

.item-selected span {
    letter-spacing: -1px;
}

.item-after {
    height: 92px;
    border-top: 0;
}

.star {
    flex: none;
    width: 54px;
    height: 54px;
    margin-right: -8px;
    color: #d4d4d4;
    -webkit-text-stroke: 0;
}

.item-selected .star {
    margin-right: 0;
    color: #e6eef8;
}

.list-scroll {
    position: absolute;
    left: 705px;
    top: 961px;
    width: 6px;
    height: 578px;
    background: #555;
}

.form-pane {
    flex: 1;
    min-width: 0;
    box-sizing: border-box;
    padding: 89px 62px 0 59px;
}

.panel-add {
    margin-top: 62px;
}

.panel-head {
    height: 51px;
    box-sizing: border-box;
    padding-left: 43px;
    background: #dcdcdc;
    font-size: 36px;
    font-weight: 700;
    line-height: 50px;
    letter-spacing: -0.8px;
    color: #111;
}

.panel-body {
    box-sizing: border-box;
    padding: 0 14px;
    border: 2px solid #e8e8e8;
    border-top: 0;
}

.panel-body-list {
    height: 533px;
}

.hint {
    height: 40px;
    margin-bottom: 37px;
    padding-top: 45px;
    font-style: italic;
    line-height: 40px;
    letter-spacing: 0.3px;
}

.url {
    letter-spacing: -1.1px;
}

.wide {
    letter-spacing: 0.8px;
}

.wide-less {
    letter-spacing: 0.5px;
}

.ep-row {
    display: grid;
    grid-template-columns: 417px 749px 357px 1fr 142px;
    align-items: center;
    height: 100px;
    margin-right: 2px;
    box-sizing: border-box;
    border: 3px solid #e8e8e8;
    border-top: 0;
    border-bottom: 0;
    padding-left: 22px;
}

.ep-row span {
    padding-top: 7px;
}

.ep-row + .ep-row {
    height: 103px;
    border-top: 5px solid #e8e8e8;
    border-bottom: 3px solid #e8e8e8;
}

.ep-row.ep-head {
    height: 88px;
    border: 0;
    padding-left: 25px;
    background: #595959;
    color: #fff;
    font-weight: 700;
    letter-spacing: 1.2px;
}

.ep-head span {
    padding-top: 0;
}

.ep-row.ep-head + .ep-row {
    height: 100px;
    border-top: 0;
    border-bottom: 0;
}

.minus {
    display: flex;
    align-items: center;
    justify-content: center;
    width: 118px;
    height: 65px;
    padding: 0;
    background: #f0f0f0;
    border: 2px solid #777;
}

.minus i {
    width: 47px;
    height: 7px;
    border-radius: 4px;
    background: #666;
}

.btn {
    box-sizing: border-box;
    padding: 0;
    background: #f0f0f0;
    border: 3px solid #999;
    border-radius: 3px;
    font-family: inherit;
    font-size: 36px;
    color: #111;
    -webkit-text-stroke: 0.3px;
}

.csv-row {
    display: flex;
    justify-content: flex-end;
    gap: 26px;
    margin-top: 34px;
}

.btn-export {
    width: 296px;
    height: 72px;
}

.btn-import {
    width: 298px;
    height: 72px;
}

.panel-add .panel-head {
    height: 50px;
    letter-spacing: -1.2px;
}

.panel-body-form {
    height: 476px;
    padding-top: 23px;
}

.form-row {
    display: flex;
    height: 80px;
}

.form-row label {
    flex: none;
    width: 391px;
    padding-top: 30px;
    line-height: 40px;
}

.field {
    position: relative;
    flex: 1;
    box-sizing: border-box;
    padding: 30px 0 0 18px;
    border-bottom: 3px solid #777;
    background:
        linear-gradient(#777, #777) left bottom / 3px 18px no-repeat,
        linear-gradient(#777, #777) right bottom / 3px 18px no-repeat;
    line-height: 40px;
}

.field-select {
    padding-left: 14px;
}

.select-corner {
    position: absolute;
    right: 3px;
    bottom: 2px;
    width: 0;
    height: 0;
    border-left: 26px solid transparent;
    border-bottom: 24px solid #8a8a8a;
}

.status-row {
    display: flex;
    align-items: center;
    height: 71px;
    margin-top: 48px;
}

.status-dot {
    width: 29px;
    height: 29px;
    border-radius: 50%;
    background: #4caf50;
}

.status-text {
    margin: 0 auto 0 29px;
    font-weight: 700;
    letter-spacing: 1.5px;
    color: #4caf50;
}

.btn-check {
    width: 323px;
    height: 71px;
    background: #dfe5ee;
    border-color: #7fa3d0;
}

.btn-store {
    width: 314px;
    height: 71px;
    margin-left: 30px;
}

.dialog-foot {
    display: flex;
    justify-content: flex-end;
    gap: 24px;
    height: 109px;
    margin-top: 31px;
    box-sizing: border-box;
    padding-right: 44px;
    background: #cfcfcf;
    border-top: 3px solid #888;
}

.foot-btn {
    width: 393px;
    text-align: center;
    font-weight: 700;
    line-height: 104px;
}

/* callouts */
.callouts {
    position: absolute;
    left: 0;
    top: 0;
    pointer-events: none;
}

.num circle {
    fill: none;
    stroke: #0070c0;
    stroke-width: 6;
}

.num text {
    fill: #0070c0;
    stroke: #0070c0;
    stroke-width: 2;
    font-family: "Liberation Sans", sans-serif;
    font-size: 66px;
    font-weight: 700;
    text-anchor: middle;
}
```
